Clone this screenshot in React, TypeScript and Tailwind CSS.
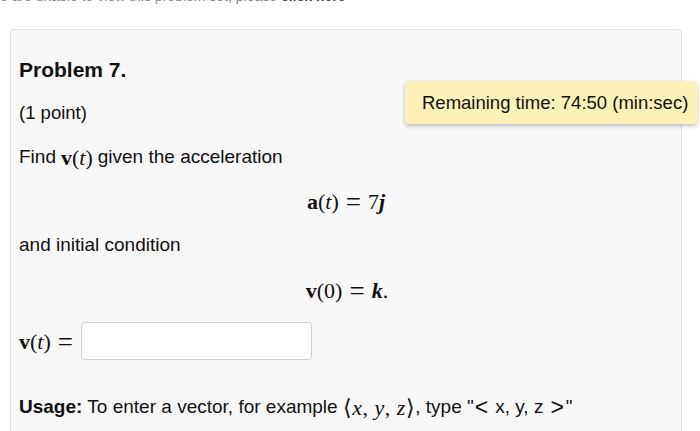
const sans = 'font-["Liberation_Sans",Arial,sans-serif]';
const serif = 'font-["Liberation_Serif","Times_New_Roman",serif]';

function Eq() {
  return <span className="mx-[7px] text-[27px] leading-none align-[-2px]">=</span>;
}

export default function App() {
  return (
    <div className={`relative w-[700px] h-[431px] overflow-hidden bg-white text-[#111] ${sans}`}>
      <div className="h-[41px] -mt-[12px] leading-[16px] text-[14px] text-[#888] whitespace-nowrap">
        e are unable to view this problem set, please <b className="text-[#444]">click here</b>
      </div>

      <div className="ml-[10px] w-[672px] h-[460px] rounded-[4px] border border-[#e1e1e1] bg-[#f8f8f8] pt-[18px] pl-[8px] text-[19px]">
        <div className="h-[43px] flex items-center">
          <h2 className="font-bold text-[21px]">Problem 7.</h2>
        </div>
        <div className="h-[44px] flex items-center text-[18.5px]">(1 point)</div>
        <div className="h-[44px] flex items-center gap-[5px]">
          <span>Find</span>
          <span className={`${serif} text-[22px] whitespace-nowrap`}>
            <b>v</b>(<i>t</i>)
          </span>
          <span>given the acceleration</span>
        </div>
        <div className={`h-[44px] flex items-center justify-center pr-[8px] ${serif} text-[22px]`}>
          <span>
            <b>a</b>(<i>t</i>)<Eq />7<b><i>j</i></b>
          </span>
        </div>
        <div className="h-[45px] flex items-center">and initial condition</div>
        <div className={`h-[45px] flex items-center justify-center pr-[6px] ${serif} text-[22px]`}>
          <span>
            <b>v</b>(0)<Eq /><b><i>k</i></b>.
          </span>
        </div>
        <div className="h-[56px] flex items-center">
          <span className={`${serif} text-[22px]`}>
            <b>v</b>(<i>t</i>)<span className="ml-[7px] text-[27px] leading-none align-[-2px]">=</span>
          </span>
          <input
            className="ml-[8px] w-[231px] h-[38px] rounded-[4px] border border-[#cfcfcf] bg-white outline-none"
            type="text"
          />
        </div>
        <div className="h-[16px]" />
        <div className="h-[44px] flex items-center whitespace-nowrap">
          <b>Usage:</b>
          <span className="ml-[5px]">To enter a vector, for example</span>
          <span className={`${serif} text-[22px] ml-[5px] tracking-[0.5px]`}>
            ⟨<i>x</i>, <i>y</i>, <i>z</i>⟩
          </span>
          <span>, type "</span>
          <span className="text-[23px] ml-[1px]">&lt;</span>
          <span className="ml-[7px]">x, y, z</span>
          <span className="text-[23px] ml-[7px]">&gt;</span>
          <span className="ml-[2px]">"</span>
        </div>
      </div>

      <div className="absolute left-[405px] top-[81px] w-[292px] h-[43px] rounded-[4px] bg-[#fcf1b7] shadow-[0_2px_4px_rgba(0,0,0,0.25)] flex items-center pl-[17px] text-[18.5px] whitespace-nowrap">
        Remaining time: 74:50 (min:sec)
      </div>
    </div>
  );
}
